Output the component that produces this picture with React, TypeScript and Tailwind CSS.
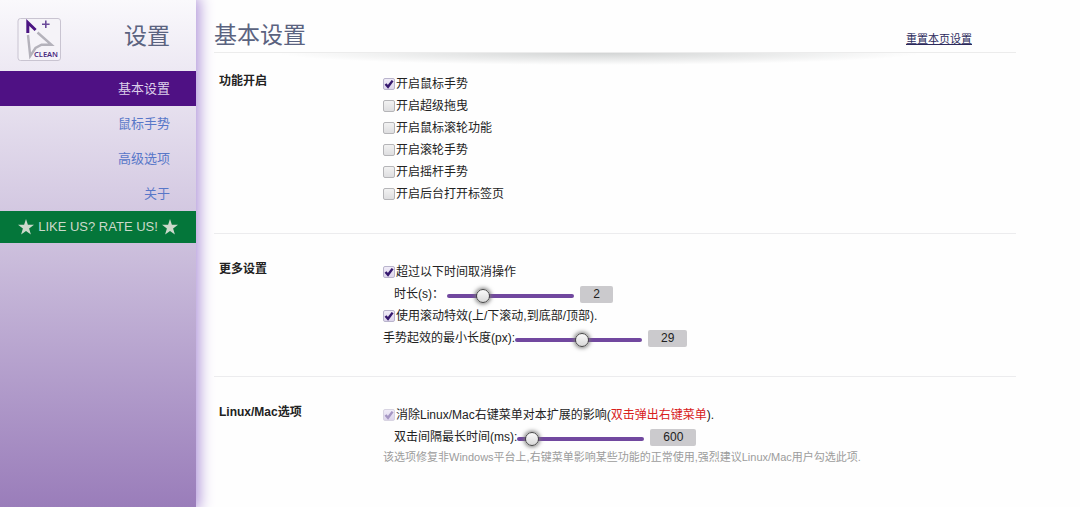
import { useState } from 'react';
import type { ReactNode } from 'react';

const navItems = ['基本设置', '鼠标手势', '高级选项', '关于'];

const features = [
  { label: '开启鼠标手势', checked: true },
  { label: '开启超级拖曳', checked: false },
  { label: '开启鼠标滚轮功能', checked: false },
  { label: '开启滚轮手势', checked: false },
  { label: '开启摇杆手势', checked: false },
  { label: '开启后台打开标签页', checked: false },
];

function Logo() {
  return (
    <svg viewBox="0 0 44 44" className="h-11 w-11" role="img" aria-label="CLEAN">
      <rect x="1" y="0.5" width="42.5" height="42" rx="2.5" fill="#f5f3f8" stroke="#c9c4d1" />
      <path d="M11 17 L13.2 38 L18.5 30 L24.5 26.8 L34.5 26.8 L20.5 14.5" fill="none" stroke="#b4b2bb" strokeWidth="2.4" />
      <path d="M10.8 15 V4.5 L18.6 12" fill="none" stroke="#4b1482" strokeWidth="3" />
      <path d="M28.8 2.5 V10 M25 6.2 H32.6" stroke="#6b4a9a" strokeWidth="1.6" />
      <text x="17" y="39" fontSize="7.5" fontWeight="600" fontFamily="Noto Sans, sans-serif" fill="#4b2a80">
        CLEAN
      </text>
    </svg>
  );
}

function Star() {
  return (
    <svg viewBox="0 0 16 16" className="h-4 w-4" fill="currentColor" aria-hidden="true">
      <path d="M8 0 L9.9 5.8 H16 L11.1 9.5 L12.9 15.5 L8 11.9 L3.1 15.5 L4.9 9.5 L0 5.8 H6.1 Z" />
    </svg>
  );
}

function Sidebar() {
  const [active, setActive] = useState(0);

  return (
    <aside className="flex w-[196px] shrink-0 flex-col bg-linear-to-b from-[#faf9fc] via-[#d0c4df] via-45% to-[#9a7dba] shadow-[0_0_14px_3px_#ab8ed6]">
      <div className="flex h-[71px] items-center justify-between pr-[26px] pl-[17px]">
        <div className="pt-2">
          <Logo />
        </div>
        <h2 className="text-[23px] leading-7 text-[#5b6380]">设置</h2>
      </div>
      <nav className="flex flex-col text-right text-[13px]">
        {navItems.map((item, i) => (
          <a
            key={item}
            href="#"
            onClick={() => setActive(i)}
            className={
              i === active
                ? 'bg-[#4f1184] pr-[26px] leading-[35px] text-[#ddd0ea]'
                : 'pr-[26px] leading-[35px] text-[#5877c8]'
            }
          >
            {item}
          </a>
        ))}
      </nav>
      <a href="#" className="flex h-8 items-center justify-center gap-1 bg-[#04763a] text-[13px] text-[#ccd9cb]">
        <Star />
        LIKE US? RATE US!
        <Star />
      </a>
    </aside>
  );
}

interface CheckProps {
  checked: boolean;
  disabled?: boolean;
  children: ReactNode;
}

function Check({ checked, disabled, children }: CheckProps) {
  return (
    <label className="flex h-[22px] items-center gap-px">
      <span className="grid">
        <input
          type="checkbox"
          defaultChecked={checked}
          disabled={disabled}
          className="peer col-start-1 row-start-1 h-3 w-3 appearance-none rounded-xs border border-[#b5b5b8] bg-linear-to-b from-[#f2f2f2] to-[#dedee0] checked:border-[#b9b4cc] checked:from-[#f0ecf8] checked:to-[#ddd5ec] disabled:border-[#d8d4e2]"
        />
        <svg
          viewBox="0 0 12 12"
          className="pointer-events-none invisible col-start-1 row-start-1 h-3 w-3 text-[#35186e] peer-checked:visible peer-disabled:text-[#a596c4]"
        >
          <path d="M2.5 6 L5 8.8 L9.6 2.6" fill="none" stroke="currentColor" strokeWidth="2.4" />
        </svg>
      </span>
      <span>{children}</span>
    </label>
  );
}

interface SliderProps {
  id: string;
  label: string;
  min: number;
  max: number;
  initial: number;
}

function Slider({ id, label, min, max, initial }: SliderProps) {
  const [value, setValue] = useState(initial);

  return (
    <div className="flex h-[22px] items-center">
      <label htmlFor={id}>{label}</label>
      <input
        id={id}
        type="range"
        min={min}
        max={max}
        value={value}
        onChange={e => setValue(+e.target.value)}
        className="mt-1 mr-1.5 h-1 w-[127px] appearance-none rounded-full bg-[#71489f] [&::-webkit-slider-thumb]:h-3.5 [&::-webkit-slider-thumb]:w-3.5 [&::-webkit-slider-thumb]:appearance-none [&::-webkit-slider-thumb]:rounded-full [&::-webkit-slider-thumb]:border [&::-webkit-slider-thumb]:border-[#444] [&::-webkit-slider-thumb]:bg-linear-to-b [&::-webkit-slider-thumb]:from-[#fafafa] [&::-webkit-slider-thumb]:to-[#d8d8d8] [&::-webkit-slider-thumb]:shadow-[0_0_4px_1px_#777]"
      />
      <output htmlFor={id} className="rounded-xs bg-[#cbcacd] px-[13px] leading-[17px]">
        {value}
      </output>
    </div>
  );
}

function Section({ title, children }: { title: string; children: ReactNode }) {
  return (
    <section className="flex py-[27px] pl-[5px] first:pt-5 first:pb-7">
      <h3 className="w-[164px] shrink-0 leading-4 font-bold">{title}</h3>
      <div>{children}</div>
    </section>
  );
}

export default function App() {
  return (
    <div className="flex min-h-screen bg-[#fefefe] font-['Liberation_Sans','Noto_Sans_CJK_SC',sans-serif] text-xs text-[#222]">
      <Sidebar />
      <main className="mr-16 ml-[18px] flex-1">
        <header className="flex h-[52px] items-end justify-between pr-11">
          <h1 className="pb-[3px] text-[23px] leading-7 text-[#5b6380]">基本设置</h1>
          <a href="#" className="pb-[5px] text-[11px] leading-4 text-[#2c2a5c] underline">
            重置本页设置
          </a>
        </header>
        <div className="-mb-3 h-[13px] border-t border-[#ececec] bg-[radial-gradient(40%_100%_at_48%_0%,#d2d4d4,transparent)]" />
        <div className="divide-y divide-[#ececee]">
          <Section title="功能开启">
            {features.map(item => (
              <Check key={item.label} checked={item.checked}>
                {item.label}
              </Check>
            ))}
          </Section>
          <Section title="更多设置">
            <Check checked>超过以下时间取消操作</Check>
            <div className="pl-[11px]">
              <Slider id="timeout" label={'时长(s)：\u00a0'} min={1} max={5} initial={2} />
            </div>
            <Check checked>使用滚动特效(上/下滚动,到底部/顶部).</Check>
            <Slider id="distance" label="手势起效的最小长度(px):" min={5} max={50} initial={29} />
          </Section>
          <Section title="Linux/Mac选项">
            <Check checked disabled>
              消除Linux/Mac右键菜单对本扩展的影响(<span className="text-[#d8201c]">双击弹出右键菜单</span>).
            </Check>
            <div className="pl-[11px]">
              <Slider id="interval" label="双击间隔最长时间(ms):" min={500} max={2000} initial={600} />
            </div>
            <p className="text-[11px] leading-[18px] text-[#9c9c9c]">
              该选项修复非Windows平台上,右键菜单影响某些功能的正常使用,强烈建议Linux/Mac用户勾选此项.
            </p>
          </Section>
        </div>
      </main>
    </div>
  );
}
